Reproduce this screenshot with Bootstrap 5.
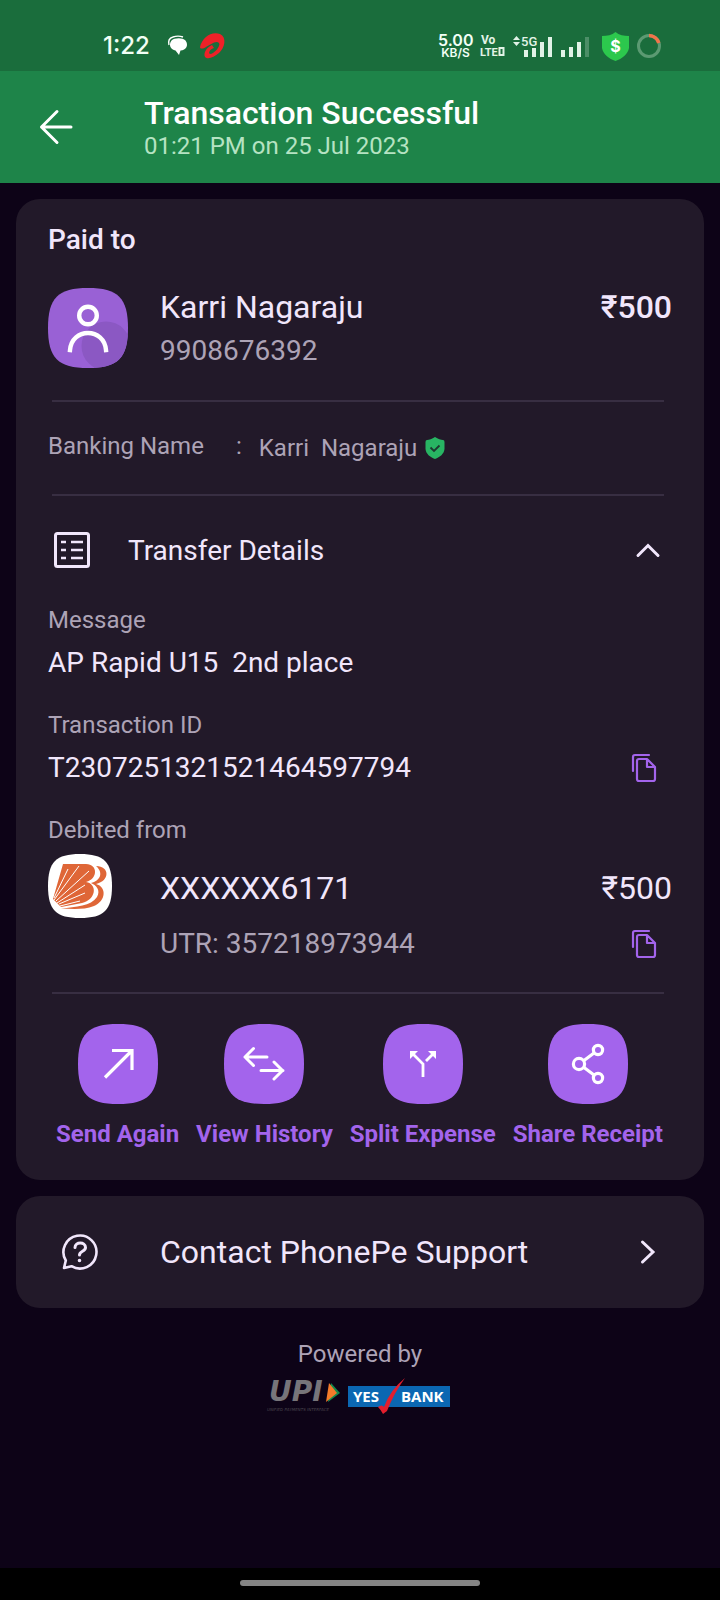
<!DOCTYPE html>
<html lang="en">
<head>
<meta charset="utf-8">
<meta name="viewport" content="width=device-width, initial-scale=1">
<title>Transaction Successful</title>
<link href="https://cdn.jsdelivr.net/npm/bootstrap@5.3.0/dist/css/bootstrap.min.css" rel="stylesheet">
<style>
  :root { --ink: #f1e6fb; --dim: #ada3b6; --violet: #a364ec; --panel: #221929; }
  body { background: #0d0317; color: var(--ink); font-family: Roboto, "Liberation Sans", sans-serif; font-size: 28px; line-height: 36px; }
  svg { display: block; flex: none; overflow: visible; }
  .status { background: #1a6d3c; height: 71px; padding: 21px 59px 0 103px; font-family: Inter, "Liberation Sans", sans-serif; color: #f2fff6; }
  .clock { font-size: 24px; font-weight: 500; line-height: 28px; width: 48px; margin-right: 17px; }
  .gap-l { margin-left: 12px; }
  .speed { width: 35px; margin-right: 8px; font-weight: 600; }
  .speed-value { font-size: 16px; line-height: 14px; }
  .speed-unit { font-size: 12px; line-height: 12px; }
  .topbar { background: #1e8449; height: 112px; padding-left: 40px; color: #fff; }
  .topbar h1 { font-size: 32px; line-height: 37px; font-weight: 500; margin: 0; }
  .topbar p { font-size: 24px; line-height: 28px; margin: 0; color: #b5e3c2; }
  .topbar .titles { margin-left: 72px; }
  .plain { background: none; border: 0; padding: 0; color: inherit; }
  .panel { background: var(--panel); border-radius: 24px; margin: 16px 16px 0; }
  .receipt { padding: 24px 32px 30px; }
  .receipt h2 { font-size: 28px; line-height: 33px; font-weight: 500; margin: 0 0 32px; }
  .payee { margin-left: 32px; }
  .amount { font-weight: 500; }
  .big { font-size: 32px; line-height: 38px; }
  .phone { line-height: 37px; margin-top: 6px; color: var(--dim); }
  .rule { height: 2px; margin: 0 8px 0 4px; border: 0; opacity: 1; background: #382e42; }
  .payee-row { height: 112px; }
  .tag { font-size: 24px; line-height: 32px; color: var(--dim); }
  .bankname { height: 92px; }
  .bankname dt { width: 188px; font-weight: 400; padding-bottom: 4px; }
  .holder { margin-left: 17px; }
  .toggle { height: 108px; padding: 0 12px 0 6px; text-align: left; }
  .toggle .caption { margin-left: 38px; line-height: 37px; }
  .val { line-height: 37px; margin-top: 8px; }
  .field { margin-bottom: 28px; }
  .copy { color: var(--violet); margin-right: 16px; }
  .account { margin-top: 8px; height: 64px; }
  .account .number { margin-left: 48px; }
  .utr { margin: 8px 0 30px; padding-left: 112px; color: var(--dim); }
  .actions { margin: 30px 9px 0 8px; }
  .actions button { color: var(--violet); font-size: 24px; line-height: 32px; font-weight: 700; }
  .actions svg { margin: 0 auto 14px; }
  .support { height: 112px; padding: 0 44px 0 46px; color: var(--ink); }
  .support .caption { margin-left: 62px; }
  .powered { margin-top: 30px; }
  .logos { margin-top: 8px; padding-right: 4px; gap: 8px; }
  .homebar { background: #000; height: 32px; }
  .homebar span { width: 33.3333%; height: 6px; border-radius: 3px; background: #848484; margin-top: -2px; }
</style>
</head>
<body>
<div class="d-flex flex-column min-vh-100">
  <div class="status d-flex align-items-center">
    <span class="clock">1:22</span>
    <svg width="20" height="20" viewBox="0 0 20 20"><path d="M1 9C0 5 1 2 5 1 8 0 12 0 15 1" fill="none" stroke="#fff" stroke-width="1.400"/><path d="M3.500 4.500C6 2 14 1 17.500 4.500 21 9 18 14.500 12.500 14.500L11 19 7.500 14.500C3 14 0 9 3.500 4.500Z" fill="#fff"/></svg>
    <svg class="gap-l" width="25" height="26" viewBox="0 0 25 26"><path d="M0 14C2 5 11-2 20 1 27 4 25 15 19 20 14 24 8 27 5 24 3 20 7 14 12 12L14 15C10 16 8 20 10 21 14 21 21 13 19 10 16 7 10 12 6 14 3 16 0 16 0 14Z" fill="#ee2128"/></svg>
    <div class="d-flex align-items-center ms-auto">
      <div class="speed text-center"><div class="speed-value">5.00</div><div class="speed-unit">KB/S</div></div>
      <svg width="23" height="22" viewBox="0 0 23 22" fill="#e2f3e7" font-family="Roboto, sans-serif" font-weight="700"><text x="0" y="9" font-size="12">Vo</text><text x="-1" y="21" font-size="11">LTE</text><path d="M18.500 13h4v7h-4z" fill="none" stroke="#e2f3e7" stroke-width="2"/></svg>
      <svg class="ms-2" width="41" height="22" viewBox="0 0 41 22" fill="#e2f3e7"><path d="M1 5l3.500-4L8 5zM1 7h7l-3.500 4zM12 15h4v7h-4zM20 13h4v9h-4zM28 7h4v15h-4zM36 2h4v20h-4z"/><text x="9" y="11" font-size="13" font-weight="500" font-family="Roboto, sans-serif">5G</text></svg>
      <svg class="ms-2" width="29" height="22" viewBox="0 0 29 22" fill="#e2f3e7"><path d="M0 15h4v7H0zM8 12h4v10H8zM16 7h4v15h-4z"/><path d="M24 2h4v20h-4z" opacity=".25"/></svg>
      <svg class="gap-l" width="27" height="29" viewBox="0 0 27 29"><path d="M13.500 0C17 3 22 4 27 4V16C26 22 20 27 13.500 29 7 27 1 22 0 16V4C5 4 10 3 13.500 0Z" fill="#2cc84d"/><text x="13.500" y="20" text-anchor="middle" font-size="16" font-weight="700" font-family="Inter, sans-serif" fill="#fff">$</text></svg>
      <svg class="ms-2" width="24" height="24" viewBox="0 0 24 24" fill="none" stroke-width="3"><circle cx="12" cy="12" r="10.500" stroke="#5b9a72"/><path d="M12 1.500A10.500 10.500 0 0 1 21.800 9" stroke="#f0744a" stroke-width="3.600"/></svg>
    </div>
  </div>

  <header class="topbar d-flex align-items-center">
    <button class="plain" type="button" aria-label="Back"><svg width="32" height="34" viewBox="0 0 32 34" fill="none" stroke="#fff" stroke-width="3" stroke-linecap="round" stroke-linejoin="round"><path d="M17 1.500 1.500 17 17 32.500M1.500 17H31"/></svg></button>
    <div class="titles"><h1>Transaction Successful</h1><p>01:21 PM on 25 Jul 2023</p></div>
  </header>

  <main>
    <section class="panel receipt">
      <h2>Paid to</h2>
      <div class="payee-row d-flex">
        <svg width="80" height="80" viewBox="0 0 80 80"><defs><clipPath id="avatar"><path d="M40 0C70 0 80 10 80 40S70 80 40 80 0 70 0 40 10 0 40 0Z"/></clipPath></defs><g clip-path="url(#avatar)"><path d="M0 0h80v80H0z" fill="#9961d5"/><circle cx="58" cy="58" r="24.500" fill="#8b58c3"/></g><g fill="none" stroke="#fff" stroke-width="4.400"><circle cx="40" cy="27.500" r="8.800"/><path d="M22 62C23 51 31 45 40 45S57 51 58 62" stroke-linecap="square"/></g></svg>
        <div class="payee flex-grow-1">
          <div class="big d-flex justify-content-between"><span>Karri Nagaraju</span><span class="amount">₹500</span></div>
          <div class="phone">9908676392</div>
        </div>
      </div>
      <hr class="rule">
      <dl class="bankname tag d-flex align-items-center mb-0">
        <dt>Banking Name</dt>
        <dd class="d-flex align-items-center mb-0"><span class="pb-1">:</span><span class="holder">Karri&nbsp; Nagaraju</span>
          <svg class="ms-2" width="20" height="22" viewBox="0 0 20 22"><path d="M10 0C13 2 16 3 18 3Q19.500 3 19.500 5V12C19 17 15 20 10 22 5 20 1 17 .5 12V5Q.5 3 2 3C4 3 7 2 10 0Z" fill="#28b463"/><path d="M5.500 10.500l3.500 3.500 5.500-5.500" fill="none" stroke="#1d3830" stroke-width="1.800"/></svg></dd>
      </dl>
      <hr class="rule">
      <button class="plain toggle w-100 d-flex align-items-center" type="button" data-bs-toggle="collapse" data-bs-target="#details" aria-expanded="true" aria-controls="details">
        <svg width="36" height="36" viewBox="0 0 36 36" fill="none" stroke="currentColor" stroke-width="3"><rect x="1.500" y="1.500" width="33" height="33" rx="2"/><path d="M7 10h5M17 10h12M7 18h5M17 18h12M7 26h5M17 26h12" stroke-width="2.400"/></svg>
        <span class="caption">Transfer Details</span>
        <svg class="ms-auto" width="24" height="24" viewBox="0 0 24 24" fill="none" stroke="currentColor" stroke-width="3" stroke-linecap="round"><path d="M2 17.500 12 7.500l10 10"/></svg>
      </button>
      <div id="details" class="collapse show">
        <div class="field"><div class="tag">Message</div><div class="val">AP Rapid U15&nbsp; 2nd place</div></div>
        <div class="field"><div class="tag">Transaction ID</div>
          <div class="val d-flex align-items-center justify-content-between"><span>T2307251321521464597794</span>
            <button class="plain copy" type="button" aria-label="Copy transaction ID"><svg width="24" height="28" viewBox="0 0 24 28" fill="none" stroke="currentColor" stroke-width="2.200" stroke-linejoin="round" stroke-linecap="round"><path d="M1 17V3Q1 1 3 1H17M5 7Q5 5 7 5H15L23 13V25Q23 27 21 27H7Q5 27 5 25ZM15 5V13H23"/></svg></button></div>
        </div>
        <div class="tag">Debited from</div>
        <div class="account d-flex align-items-center">
          <svg width="64" height="64" viewBox="0 0 64 64"><path d="M32 0C56 0 64 8 64 32S56 64 32 64 0 56 0 32 8 0 32 0Z" fill="#fff"/><g fill="#df6637"><path d="M15 10H38C50 10 50 25 38 28 50 30 48 46 34 49L13 53 5 45Z"/><path d="M48 12C62 12 62 27 48 30 59 33 58 47 46 52 36 56 24 55 13 54.500 28 53 43 52 49 43 53 36 48 31 43 29 52 27 56 19 48 12Z"/></g><path d="M6 44 20 15M6 46 31 12M8 47 41 17M9 49 37 31M11 50 37 39M12 52 32 47" stroke="#fff" stroke-width="1"/></svg>
          <span class="number big pt-1">XXXXXX6171</span><span class="big pt-1 ms-auto">₹500</span>
        </div>
        <div class="utr d-flex align-items-center justify-content-between"><span>UTR: 357218973944</span>
          <button class="plain copy" type="button" aria-label="Copy UTR"><svg width="24" height="28" viewBox="0 0 24 28" fill="none" stroke="currentColor" stroke-width="2.200" stroke-linejoin="round" stroke-linecap="round"><path d="M1 17V3Q1 1 3 1H17M5 7Q5 5 7 5H15L23 13V25Q23 27 21 27H7Q5 27 5 25ZM15 5V13H23"/></svg></button></div>
      </div>
      <hr class="rule">
      <div class="actions d-flex justify-content-between">
        <button class="plain" type="button"><svg width="80" height="80" viewBox="0 0 80 80"><path d="M40 0C70 0 80 10 80 40S70 80 40 80 0 70 0 40 10 0 40 0Z" fill="#a364ec"/><path d="M27 53.500 54 26.500M34 26.500H54V46" fill="none" stroke="#fff" stroke-width="3.200"/></svg>Send Again</button>
        <button class="plain" type="button"><svg width="80" height="80" viewBox="0 0 80 80"><path d="M40 0C70 0 80 10 80 40S70 80 40 80 0 70 0 40 10 0 40 0Z" fill="#a364ec"/><path d="M43 33H21M29.500 24.500 21 33l8.500 8.500M37 46.500H59M50 38l8.500 8.500L50 55" fill="none" stroke="#fff" stroke-width="3" stroke-linecap="round" stroke-linejoin="round"/></svg>View History</button>
        <button class="plain" type="button"><svg width="80" height="80" viewBox="0 0 80 80"><path d="M40 0C70 0 80 10 80 40S70 80 40 80 0 70 0 40 10 0 40 0Z" fill="#a364ec"/><path d="M40 53V40L29 29M43 37 51 29" fill="none" stroke="#fff" stroke-width="2.800"/><path d="M27 27h8l-8 8zM53 27h-8l8 8z" fill="#fff"/></svg>Split Expense</button>
        <button class="plain" type="button"><svg width="80" height="80" viewBox="0 0 80 80"><path d="M40 0C70 0 80 10 80 40S70 80 40 80 0 70 0 40 10 0 40 0Z" fill="#a364ec"/><g fill="none" stroke="#fff" stroke-width="3.200"><circle cx="31" cy="40" r="5.600"/><circle cx="50" cy="26" r="4.600"/><circle cx="50" cy="54" r="4.600"/><path d="M36 36.500 46 29M36 43.500 46 51"/></g></svg>Share Receipt</button>
      </div>
    </section>

    <a class="panel support big d-flex align-items-center text-decoration-none" href="#">
      <svg width="36" height="36" viewBox="0 0 36 36" fill="none" stroke="currentColor" stroke-width="2.600" stroke-linecap="round" stroke-linejoin="round"><path d="M3.800 26.500A16.500 16.500 0 1 1 9.500 32.200L2 34Z"/><path d="M13 13.500C13 7.500 23.500 7.500 23.500 13.500 23.500 17.500 17.500 17 17.500 21" stroke-width="3"/><circle cx="17.500" cy="26.500" r="1" fill="currentColor" stroke-width="1.600"/></svg>
      <span class="caption">Contact PhonePe Support</span>
      <svg class="ms-auto" width="24" height="24" viewBox="0 0 24 24" fill="none" stroke="currentColor" stroke-width="3" stroke-linecap="round"><path d="M6.500 2 17 12 6.500 22"/></svg>
    </a>
  </main>

  <footer class="powered text-center mb-4">
    <div class="tag">Powered by</div>
    <div class="logos d-flex justify-content-center">
      <svg width="73" height="36" viewBox="0 0 73 36"><text x="2" y="23" font-family="'DejaVu Sans', sans-serif" font-style="italic" font-weight="700" font-size="28" fill="#77757a">UPI</text><path d="M64 5 73 15 61 24Z" fill="#128a4d"/><path d="M62 5 70 15 59 24Z" fill="#f47b2a"/><text x="0" y="33" font-family="'DejaVu Sans', sans-serif" font-style="italic" font-size="4" fill="#4a454e">UNIFIED PAYMENTS INTERFACE</text></svg>
      <svg width="102" height="36" viewBox="0 0 102 36"><path d="M0 8h102v21H0z" fill="#0b67b2"/><g fill="#fff" font-family="'Open Sans', sans-serif" font-weight="700" font-size="15"><text x="5" y="24">YES</text><text x="53" y="24">BANK</text></g><path d="M30 29Q34 26 36 29 42 12 57 0 46 15 39 33L35 36Q33 32 30 29Z" fill="#e31e2d"/></svg>
    </div>
  </footer>

  <div class="homebar mt-auto d-flex justify-content-center align-items-center"><span></span></div>
</div>
<script src="https://cdn.jsdelivr.net/npm/bootstrap@5.3.0/dist/js/bootstrap.bundle.min.js"></script>
</body>
</html>
